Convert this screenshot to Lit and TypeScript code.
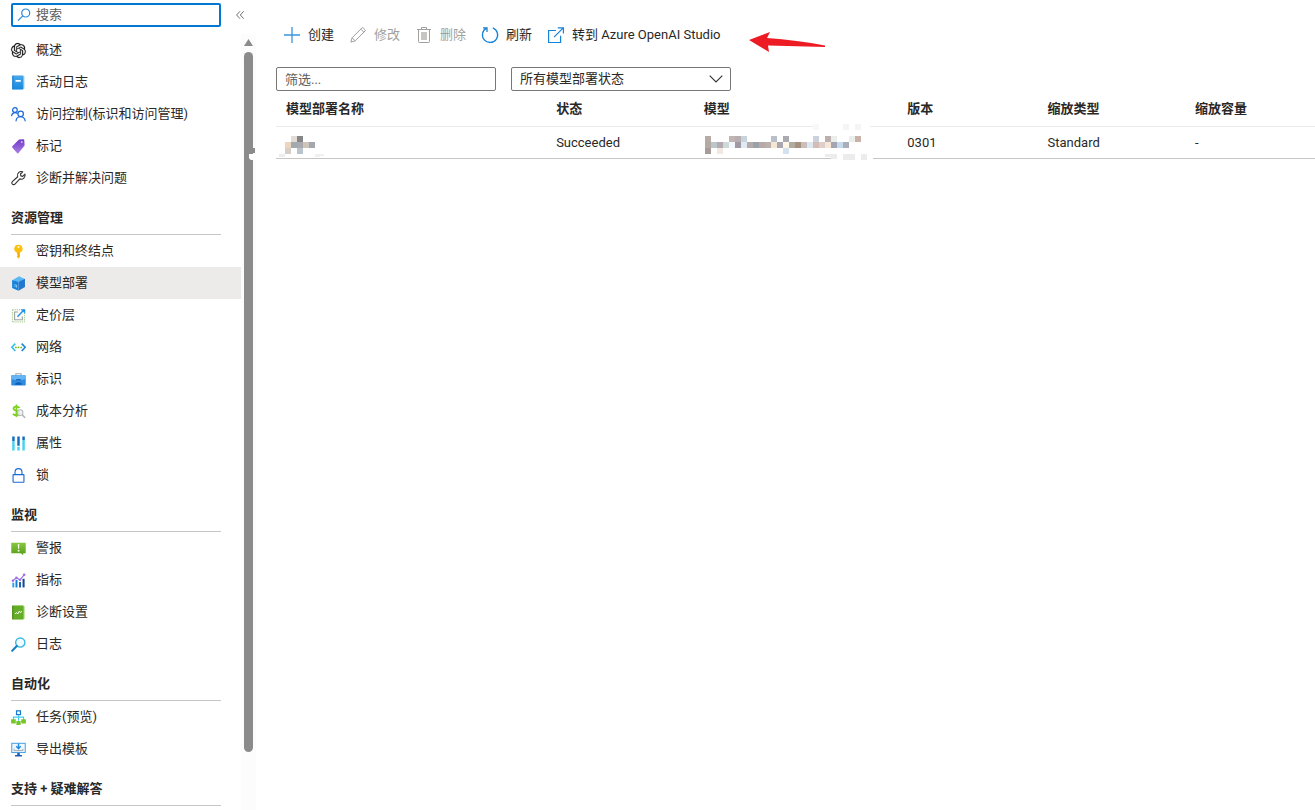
import { LitElement, html, css, svg, nothing, type TemplateResult } from "lit";
import { customElement, state } from "lit/decorators.js";
import { classMap } from "lit/directives/class-map.js";

interface NavItem {
  icon: string;
  label: string;
}
interface NavGroup {
  title?: string;
  items: NavItem[];
}
type Tile = [number, number, number, number, string];

const groups: NavGroup[] = [
  {
    items: [
      { icon: "openai", label: "概述" },
      { icon: "log", label: "活动日志" },
      { icon: "people", label: "访问控制(标识和访问管理)" },
      { icon: "tag", label: "标记" },
      { icon: "wrench", label: "诊断并解决问题" },
    ],
  },
  {
    title: "资源管理",
    items: [
      { icon: "key", label: "密钥和终结点" },
      { icon: "cube", label: "模型部署" },
      { icon: "pricing", label: "定价层" },
      { icon: "network", label: "网络" },
      { icon: "identity", label: "标识" },
      { icon: "cost", label: "成本分析" },
      { icon: "props", label: "属性" },
      { icon: "lock", label: "锁" },
    ],
  },
  {
    title: "监视",
    items: [
      { icon: "alert", label: "警报" },
      { icon: "metrics", label: "指标" },
      { icon: "diag", label: "诊断设置" },
      { icon: "logs", label: "日志" },
    ],
  },
  {
    title: "自动化",
    items: [
      { icon: "tasks", label: "任务(预览)" },
      { icon: "export", label: "导出模板" },
    ],
  },
  { title: "支持 + 疑难解答", items: [] },
];

// All glyphs share a 16 x 16 grid.
const glyphs: Record<string, TemplateResult> = {
  openai: svg`<g transform="scale(.6667)"><path fill="#1b1a19" stroke="#1b1a19" stroke-width=".3" d="M22.2819 9.8211a5.9847 5.9847 0 0 0-.5157-4.9108 6.0462 6.0462 0 0 0-6.5098-2.9A6.0651 6.0651 0 0 0 4.9807 4.1818a5.9847 5.9847 0 0 0-3.9977 2.9 6.0462 6.0462 0 0 0 .7427 7.0966 5.98 5.98 0 0 0 .511 4.9107 6.051 6.051 0 0 0 6.5146 2.9001A5.9847 5.9847 0 0 0 13.2599 24a6.0557 6.0557 0 0 0 5.7718-4.2058 5.9894 5.9894 0 0 0 3.9977-2.9001 6.0557 6.0557 0 0 0-.7475-7.0729zm-9.022 12.6081a4.4755 4.4755 0 0 1-2.8764-1.0408l.1419-.0804 4.7783-2.7582a.7948.7948 0 0 0 .3927-.6813v-6.7369l2.02 1.1686a.071.071 0 0 1 .038.052v5.5826a4.504 4.504 0 0 1-4.4945 4.4944zm-9.6607-4.1254a4.4708 4.4708 0 0 1-.5346-3.0137l.142.0852 4.783 2.7582a.7712.7712 0 0 0 .7806 0l5.8428-3.3685v2.3324a.0804.0804 0 0 1-.0332.0615L9.74 19.9502a4.4992 4.4992 0 0 1-6.1408-1.6464zM2.3408 7.8956a4.485 4.485 0 0 1 2.3655-1.9728V11.6a.7664.7664 0 0 0 .3879.6765l5.8144 3.3543-2.0201 1.1685a.0757.0757 0 0 1-.071 0l-4.8303-2.7865A4.504 4.504 0 0 1 2.3408 7.872zm16.5963 3.8558L13.1038 8.364 15.1192 7.2a.0757.0757 0 0 1 .071 0l4.8303 2.7913a4.4944 4.4944 0 0 1-.6765 8.1042v-5.6772a.79.79 0 0 0-.407-.667zm2.0107-3.0231l-.142-.0852-4.7735-2.7818a.7759.7759 0 0 0-.7854 0L9.409 9.2297V6.8974a.0662.0662 0 0 1 .0284-.0615l4.8303-2.7866a4.4992 4.4992 0 0 1 6.6802 4.66zM8.3065 12.863l-2.02-1.1638a.0804.0804 0 0 1-.038-.0567V6.0742a4.4992 4.4992 0 0 1 7.3757-3.4537l-.142.0805L8.704 5.459a.7948.7948 0 0 0-.3927.6813zm1.0976-2.3654l2.602-1.4998 2.6069 1.4998v2.9994l-2.5974 1.4997-2.6067-1.4997Z"/></g>`,
  log: svg`<defs><linearGradient id="log" x2="0" y2="1"><stop stop-color="#4aa9ea"/><stop offset="1" stop-color="#1588df"/></linearGradient></defs>
    <rect x="2.5" y=".8" width="11.8" height="14.4" rx="1" fill="#8fcdf3"/><rect x="1.4" y=".6" width="11.6" height="14.8" rx=".9" fill="url(#log)"/><rect x="1.4" y=".6" width="1.2" height="14.8" rx=".6" fill="#1b7dcb"/><rect x="4.8" y="5.2" width="5.6" height="2" rx=".4" fill="#fff"/>`,
  people: svg`<g fill="none" stroke="#1b6ad6" stroke-width="1.3" stroke-linecap="round"><circle cx="4.2" cy="3.2" r="2.5"/><circle cx="10.3" cy="7.4" r="2.9"/><path d="M.7 9.2C1 7.2 2.4 5.9 4.2 5.9c.9 0 1.7.3 2.3.8M5.4 14.7c.2-2.6 2.2-4.3 4.7-4.3s4.6 1.7 5 4.3"/></g>`,
  tag: svg`<defs><linearGradient id="tag" x1="0" y1="0" x2="0" y2="1"><stop stop-color="#6f35c9"/><stop offset="1" stop-color="#a981e0"/></linearGradient></defs>
    <path d="M1.4 7.7 7.7 1.2q.5-.5 1.2-.6l4-.4q1.100-.1 1.200.9l.4 5q0 .7-.4 1.300l-6.300 7.700q-.6.6-1.200 0L1.400 9.100q-.6-.7 0-1.400Z" fill="url(#tag)"/><circle cx="11.600" cy="3.200" r="1" fill="#d7c3f4"/><path d="m7.600 1.300 6.300 6.200" stroke="#8f62d8" stroke-width=".6"/>`,
  wrench: svg`<path d="M14.9 3.4a4.1 4.1 0 0 1-5.5 5L4.2 14a1.9 1.9 0 0 1-2.8-2.7l5.7-5.2A4.1 4.1 0 0 1 12.5.9L10.1 3.2l.4 2 2 .5Z" fill="none" stroke="#323130" stroke-width="1.2" stroke-linejoin="round"/>`,
  key: svg`<path d="M8 .8a4.4 4.4 0 0 1 1.6 8.5v4.6L8 15.4l-1.7-1.6v-1.1l.9-.8-.9-.9V9.3A4.4 4.4 0 0 1 8 .8Z" fill="#fbbf0c"/><circle cx="8" cy="3.3" r="1.2" fill="#fff3c4"/><path d="M8 9.2v4.3" stroke="#e49b09" stroke-width=".7"/>`,
  cube: svg`<path d="m8.600.2 6.200 2.900-6.800 3.100-6.700-1.800Z" fill="#5bb8f4"/><path d="M1.200 4.200 8 6.200v9.500l-6.800-3Z" fill="#1583dc"/><path d="m8 6.200 6.900-3.200v8.800L8 15.700Z" fill="#2277cf"/><path d="M4.300 8.600v3.200M5.900 9.400v3" stroke="#a9dcfb" stroke-width=".8"/>`,
  pricing: svg`<rect x="1.5" y="1.900" width="13" height="13" fill="#fafbf8" stroke="#9cc47c" stroke-dasharray="1.300 1"/><path d="M7.500 4.200H3.800v8.300h8.300V9" fill="none" stroke="#a0a5a8" stroke-width="1.200"/><path d="m6.900 9.300 6.300-6.600" stroke="#2594e7" stroke-width="1.600"/><path d="M10.200 1.200h5v5Z" fill="#2594e7"/>`,
  network: svg`<g fill="none" stroke-width="1.7"><path d="M4.6 3.9.9 7.8l3.7 4" stroke="#32bfea"/><path d="m11.4 3.9 3.7 3.9-3.7 4" stroke="#1b83d8"/></g><g fill="#6cc31e"><circle cx="5.2" cy="7.9" r="1"/><circle cx="8" cy="7.9" r="1"/><circle cx="10.8" cy="7.9" r="1"/></g>`,
  identity: svg`<path d="M5.2 4V1.8h5.6V4" fill="none" stroke="#a5a9ad" stroke-width="1.2"/><rect x=".3" y="3.5" width="15.4" height="10.8" rx=".7" fill="#2d8be0"/><path d="M.3 4.2q0-.7.7-.7h14q.7 0 .7.7v3.2L8 9.3.3 7.4Z" fill="#64b5f4"/><rect x="5.600" y="7.600" width="4.800" height="1.400" fill="#0b5cb0"/><path d="M4.400 13.600c.2-1.800 1.700-2.600 3.600-2.600s3.400.8 3.600 2.600Z" fill="#0d5fb5"/>`,
  cost: svg`<path d="M9.2 4.2C8.4 3 7.1 2.7 5.8 2.7c-1.8 0-3.1.8-3.1 2.2 0 3 6.2 1.5 6.2 4.7 0 1.5-1.3 2.4-3.2 2.4-1.6 0-2.900-.5-3.600-1.600M5.800.5v13.300" fill="none" stroke="#7fd01f" stroke-width="1.900"/><circle cx="9.700" cy="9.200" r="3" fill="#eef4f2" fill-opacity=".8" stroke="#b4b8bb" stroke-width="1.100"/><path d="m12 11.500 3 3.300" stroke="#b4b8bb" stroke-width="1.800"/>`,
  props: svg`<g fill="#0f6cbd"><path d="M1.300.5h2.600v5.200H1.300zM6.700.5h2.600v10H6.700zM12.100.5h2.600v3.700h-2.600z"/></g><g fill="#45d3ef"><path d="M1.300 5.700h2.600v9.800H1.300zM6.700 11.500h2.600v4H6.700zM12.100 4.200h2.600v11.300h-2.600z"/></g>`,
  lock: svg`<rect x="2.2" y="7" width="11.6" height="8.2" rx=".5" fill="#fff" stroke="#1b6ad6" stroke-width="1.2"/><path d="M4.3 7V4.4a3.7 3.7 0 0 1 7.4 0V7" fill="none" stroke="#1b6ad6" stroke-width="1.2"/>`,
  alert: svg`<defs><linearGradient id="alert" x2="0" y2="1"><stop stop-color="#86c83c"/><stop offset="1" stop-color="#559e18"/></linearGradient></defs>
    <path d="M.3 1.900h15.400v11.100H13v2.300l-2.500-2.300H.3Z" fill="url(#alert)"/><path d="M7.200 3.500h1.700l-.3 4.800H7.500z" fill="#fff"/><circle cx="8.050" cy="10.300" r="1" fill="#fff"/>`,
  metrics: svg`<path d="M1.400 10.400h2.100v5H1.400z" fill="#2fa3ea"/><path d="M4.800 7.300h2.100v8.100H4.800z" fill="#1680d6"/><path d="M8.600 9.600h2.100v5.800H8.600z" fill="#1b5fae"/><path d="M12.300 6.200h2.200v9.200h-2.200z" fill="#134a92"/><path d="m1.900 8.300 3.900-3.200 3.800 2.300 4.400-5.400" fill="none" stroke="#a070e4" stroke-width="1.200"/><g fill="#a070e4"><circle cx="2" cy="8.200" r="1.300"/><circle cx="5.800" cy="5" r="1.300"/><circle cx="9.600" cy="7.200" r="1.300"/><circle cx="14" cy="1.900" r="1.400"/></g>`,
  diag: svg`<rect x="2.300" y=".8" width="12.200" height="14.400" rx="1" fill="#a4d66a"/><rect x="1.300" y=".6" width="12" height="14.800" rx=".9" fill="#66ad27"/><rect x="1.300" y=".6" width="1.200" height="14.800" rx=".6" fill="#4a8a18"/><path d="m4.200 9.300 2.100-1.100 1 1.300 1.600-3 .8 1.400 2-.9" fill="none" stroke="#fff" stroke-width="1"/>`,
  logs: svg`<circle cx="9.900" cy="5.900" r="4.900" fill="#f3fbfe" stroke="#3bbbe2" stroke-width="1.500"/><path d="m6.200 9.700-4.900 5" stroke="#1a7fc0" stroke-width="2.200" stroke-linecap="round"/>`,
  tasks: svg`<path d="M8 5.500v6M2.600 10.800V7.600h10.800v3.200" fill="none" stroke="#43cdec" stroke-width="1.200"/><rect x="5.900" y=".9" width="4.200" height="4" fill="#fff" stroke="#1478d4" stroke-width="1.300"/><g fill="#76c62a"><rect x=".1" y="9.800" width="5" height="4.500" rx=".4"/><rect x="5.700" y="11.600" width="4.600" height="4.300" rx=".4"/><rect x="10.900" y="9.800" width="5" height="4.500" rx=".4"/></g>`,
  export: svg`<rect x=".8" y="1.400" width="14.400" height="9.800" fill="#f0f8fe" stroke="#4ba3e6" stroke-width="1.100"/><path d="M3.300 7.200v2h9.400v-2" fill="none" stroke="#9aa2a8"/><path d="M8 1.600v5.100M5.600 4.500 8 7.100l2.400-2.600" fill="none" stroke="#1f8be3" stroke-width="1.500"/><path d="M6.600 11.600h2.800v2.200h2.300v1.600H4.300v-1.600h2.300z" fill="#1f5fae"/>`,
  search: svg`<g fill="none" stroke="#2b88d8" stroke-width="1.200"><circle cx="9.700" cy="6" r="4"/><path d="M6.800 8.900 2 13.700"/></g>`,
  add: svg`<path d="M8 0v16M0 8h16" stroke="#3a96dd" stroke-width="1.300"/>`,
  edit: svg`<path d="m.9 15.100 1.200-4.300L12 .9q.6-.5 1.300.1l1.700 1.700q.6.6 0 1.300L5.200 13.900ZM2.100 10.800l3.100 3.100M10.800 2.100l3.100 3.100" fill="none" stroke="#a19f9d" stroke-width="1"/>`,
  trash: svg`<path d="M1 2.500h14M5.500 2.500v-2h5v2M2.500 2.500v12.200q0 .8.8.8h9.400q.8 0 .8-.8V2.500" fill="none" stroke="#a19f9d"/><path d="M5 5h6v8H5z" fill="#c8c6c4"/>`,
  refresh: svg`<path d="M10.800.8a7.600 7.600 0 1 1-6.200.3M1 .9h4v4" fill="none" stroke="#1683d8" stroke-width="1.300"/>`,
  open: svg`<path d="M8 3.500H.6v12h12V8.700M6 10.200 15.300.9M9.800.8h5.600v5.600" fill="none" stroke="#1683d8" stroke-width="1.200"/>`,
};

const icon = (name: string) =>
  html`<svg class="icon" viewBox="0 0 16 16" aria-hidden="true">${glyphs[name]}</svg>`;

// Pixelated masks over private cell values; six-pixel squares given as x, y, w, h, colour.
const row = (x: number, y: number, colours: string): Tile[] =>
  colours
    .split(" ")
    .map((c, i): Tile => [x + i * 6, y, 6, 6, c])
    .filter((t) => t[4] !== "-");

const nameMask: Tile[] = [
  ...row(12, 12, "#e3dbd6 #858585"),
  ...row(6, 18, "#ecd6bd #a1a9b1 #aaaaae #cdc5b9 #a4a7b0"),
  ...row(6, 24, "#d7cec7 - #b9c4cd"),
  [0, 30, 6, 3, "#eeeeee"],
  [36, 30, 9, 2, "#f0f0f0"],
  [36, 32, 5, 1, "#f0f0f0"],
];
const modelMask: Tile[] = [
  [109, 0, 57, 6, "#ffffff"],
  [133, 30, 36, 6, "#ffffff"],
  ...row(109, 0, "#f8f8f8 - - - - #f5f5f5 - #f5f5f5"),
  ...row(1, 12, "#b8aaa5 - - - #c0b5b2 #b6aeb0 #c9d3dc - - - - #b9c0c9 - #a9abb1 - - - - #cbd2dc - #bab0b0 #eceeec - - #eceeed #c9b3a8"),
  ...row(1, 18, "#b3aaa4 #bcc6c8 #b3abb1 #cedad9 #f2f6fd #9e99a2 #dfeaf4 #b3aaac #9ba1a9 #b8a9a8 #bbb0ab #f6e7d2 #a8a6ae #fff6e6 #b0aca2 #a6917f #cabeba #dde7f2 #d2bcb5 #dfcfcb #f6e7d8 #a4a5b0 #c3dbec #a9aeb8"),
  ...row(1, 24, "#a99b9a - #f1e8e2 - - - - - - - - - - #d4e2f0"),
  [121, 30, 12, 3, "#ececec"],
  [127, 33, 6, 2, "#ececec"],
  [139, 30, 12, 6, "#ececec"],
  [157, 30, 6, 6, "#ececec"],
];

const mask = (tiles: Tile[], label: string) => html`<svg class="mask" viewBox="0 0 172 36" role="img" aria-label=${label} shape-rendering="crispEdges">
  ${tiles.map(([x, y, w, h, c]) => svg`<rect x=${x} y=${y} width=${w} height=${h} fill=${c}/>`)}
</svg>`;

@customElement("app-root")
export class AppRoot extends LitElement {
  @state() private selected = "模型部署";

  static styles = css`
    :host {
      display: flex;
      height: 100vh;
      overflow: hidden;
      background: #fff;
      color: #292827;
      font: 13px/20px Roboto, "Noto Sans CJK SC", sans-serif;
    }
    * { box-sizing: border-box; }
    button, input, select { font: inherit; color: inherit; margin: 0; }
    .icon { width: 16px; height: 16px; flex: none; display: block; overflow: visible; }
    .side { width: 256px; flex: none; display: flex; flex-direction: column; }
    .top { display: flex; align-items: center; gap: 11px; height: 34px; flex: none; padding: 0 8px 4px 11px; }
    .search {
      display: flex; align-items: center; gap: 4px; width: 210px; height: 24px;
      border: 2px solid #0078d4; border-radius: 2px; padding: 0 3px;
    }
    .search input { flex: 1; min-width: 0; border: 0; outline: 0; padding: 0; background: none; }
    input::placeholder { color: #605e5c; opacity: 1; }
    .collapse { border: 0; background: none; padding: 0; width: 16px; height: 20px; display: flex; align-items: center; justify-content: center; }
    .chev { width: 8px; height: 8px; }
    .body { flex: 1; display: flex; min-height: 0; }
    nav { flex: 1; min-width: 0; overflow: hidden; }
    ul { list-style: none; margin: 0; padding: 0; }
    h2 {
      margin: 0 20px 0 11px; height: 41px; padding-top: 14px; border-bottom: 1px solid #c8c6c4;
      font-size: 13px; line-height: 20px; font-weight: 600;
    }
    .item { display: flex; align-items: center; gap: 10px; height: 32px; padding-left: 11px; color: inherit; text-decoration: none; white-space: nowrap; }
    .item .icon { width: 15px; height: 15px; }
    .item.on { background: #edebe9; }
    .rail { position: relative; width: 15px; flex: none; background: #fcfcfc; display: flex; flex-direction: column; align-items: center; padding: 5px 0 58px; gap: 6px; }
    .up { width: 9px; height: 7px; flex: none; }
    .thumb { width: 9px; flex: 1; border-radius: 5px; background: #8b8b8b; }
    .grip { position: absolute; right: 0; top: 114px; width: 7px; height: 12px; }
    main { flex: 1; min-width: 0; padding: 19px 0 0 20px; }
    .bar { display: flex; align-items: center; gap: 16px; height: 32px; padding-left: 8px; }
    .cmd { display: flex; align-items: center; gap: 8px; height: 32px; padding: 0; border: 0; background: none; white-space: nowrap; }
    .cmd:disabled { color: #a19f9d; }
    .arrow { width: 76px; height: 22px; margin: 14px 0 0 13px; flex: none; }
    .filters { display: flex; gap: 15px; padding-top: 16px; }
    .field { position: relative; width: 220px; height: 24px; }
    .field input, .field select {
      width: 100%; height: 24px; border: 1px solid #797775; border-radius: 2px; background: #fff;
      padding: 0 8px; outline: 0; appearance: none; line-height: 20px;
    }
    .field .down { position: absolute; right: 8px; top: 8px; width: 14px; height: 8px; pointer-events: none; }
    table { width: 100%; border-collapse: separate; border-spacing: 0; table-layout: fixed; }
    th { height: 36px; padding: 0 10px; text-align: left; font-weight: 600; border-bottom: 1px solid #edebe9; }
    td { position: relative; height: 32px; padding: 0 10px; border-bottom: 1px solid #c8c6c4; }
    .mask { position: absolute; left: 3px; top: -3px; width: 172px; height: 36px; }
    .model .mask { left: 10px; }
    .c1 { width: 26%; }
    .c2 { width: 14.2%; }
    .c3 { width: 19.6%; }
    .c4 { width: 13.5%; }
    .c5 { width: 14.2%; }
  `;

  private pick(e: Event, label: string) {
    e.preventDefault();
    this.selected = label;
  }

  render() {
    return html`
      <aside class="side">
        <div class="top">
          <label class="search">${icon("search")}<input type="text" placeholder="搜索" aria-label="搜索" /></label>
          <button class="collapse" aria-label="折叠菜单">
            <svg class="chev" viewBox="0 0 8 8" aria-hidden="true"><path d="M4 .3.6 4 4 7.7M7.7.3 4.3 4l3.4 3.7" fill="none" stroke="#605e5c" stroke-width=".9" /></svg>
          </button>
        </div>
        <div class="body">
          <nav aria-label="资源菜单">
            ${groups.map(
              (g) => html`
                ${g.title ? html`<h2>${g.title}</h2>` : nothing}
                <ul>
                  ${g.items.map(
                    (i) => html`<li>
                      <a href="#" class=${classMap({ item: true, on: i.label === this.selected })} @click=${(e: Event) => this.pick(e, i.label)}>${icon(i.icon)}<span>${i.label}</span></a>
                    </li>`
                  )}
                </ul>
              `
            )}
          </nav>
          <div class="rail" aria-hidden="true">
            <svg class="up" viewBox="0 0 9 7"><path d="M4.5 0 9 7H0Z" fill="#8b8b8b" /></svg>
            <div class="thumb"></div>
            <svg class="grip" viewBox="0 0 7 12"><path d="M1 0h5v5H1z" fill="#8b8b8b" /><path d="M0 6h7v6H3Q0 12 0 9Z" fill="#fff" /></svg>
          </div>
        </div>
      </aside>
      <main>
        <div class="bar" role="toolbar" aria-label="命令">
          <button class="cmd">${icon("add")}<span>创建</span></button>
          <button class="cmd" disabled>${icon("edit")}<span>修改</span></button>
          <button class="cmd" disabled>${icon("trash")}<span>删除</span></button>
          <button class="cmd">${icon("refresh")}<span>刷新</span></button>
          <button class="cmd">${icon("open")}<span>转到 Azure OpenAI Studio</span></button>
          <svg class="arrow" viewBox="0 0 76 22" aria-hidden="true"><path d="M0 9 21 1l-3 6q30 2 58 7.500v1.500q-28-1-57-1.500l1 6.500Z" fill="#ed1c24" /></svg>
        </div>
        <div class="filters">
          <div class="field"><input type="text" placeholder="筛选..." aria-label="筛选" /></div>
          <div class="field">
            <select aria-label="模型部署状态"><option>所有模型部署状态</option></select>
            <svg class="down" viewBox="0 0 14 8" aria-hidden="true"><path d="m.7.7 6.300 6.300L13.300.7" fill="none" stroke="#323130" stroke-width="1.100" /></svg>
          </div>
        </div>
        <table>
          <colgroup><col class="c1" /><col class="c2" /><col class="c3" /><col class="c4" /><col class="c5" /><col /></colgroup>
          <thead>
            <tr><th>模型部署名称</th><th>状态</th><th>模型</th><th>版本</th><th>缩放类型</th><th>缩放容量</th></tr>
          </thead>
          <tbody>
            <tr>
              <td>${mask(nameMask, "模型部署名称")}</td>
              <td>Succeeded</td>
              <td class="model">${mask(modelMask, "模型")}</td>
              <td>0301</td>
              <td>Standard</td>
              <td>-</td>
            </tr>
          </tbody>
        </table>
      </main>
    `;
  }
}
